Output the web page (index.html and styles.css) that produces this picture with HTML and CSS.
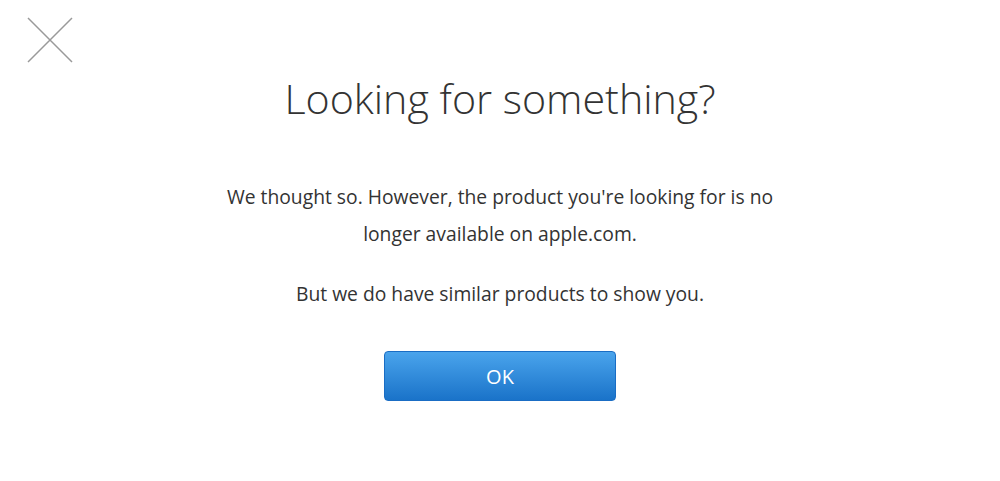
FILE: index.html
```html
<!DOCTYPE html>
<html>
<head>
<meta charset="utf-8">
<link rel="stylesheet" href="styles.css">
</head>
<body>
<div class="page">
  <button class="close" aria-label="Close">
    <svg width="46" height="46" viewBox="0 0 46 46"><path d="M1 1L45 45M45 1L1 45" stroke="#9a9a9a" stroke-width="1.5" fill="none"/></svg>
  </button>
  <main class="content">
    <h1 class="title">Looking for something?</h1>
    <p class="text">We thought so. However, the product you're looking for is no longer available on apple.com.</p>
    <p class="text second">But we do have similar products to show you.</p>
    <button class="ok">OK</button>
  </main>
</div>
</body>
</html>
```
FILE: styles.css
```css
html, body {
  margin: 0;
  padding: 0;
  background: #fff;
}
.page {
  position: relative;
  width: 1000px;
  height: 481px;
  font-family: "Open Sans", sans-serif;
  color: #333;
}
.close {
  position: absolute;
  left: 27px;
  top: 17px;
  padding: 0;
  border: 0;
  background: none;
  line-height: 0;
}
.content {
  display: flex;
  flex-direction: column;
  align-items: center;
  padding-top: 66px;
}
.title {
  margin: 0;
  font-weight: 300;
  font-size: 41.2px;
  line-height: 64px;
  letter-spacing: 0;
}
.text {
  width: 590px;
  margin: 48px 0 0;
  text-align: center;
  font-size: 19.3px;
  line-height: 37px;
}
.text.second {
  margin-top: 23px;
}
.ok {
  margin-top: 39px;
  width: 232px;
  height: 50px;
  border: 1px solid #1a6dc4;
  border-radius: 4px;
  background: linear-gradient(#4aa4ec, #1a73c9);
  color: #fff;
  font-family: "Open Sans", sans-serif;
  font-size: 20px;
}
```
